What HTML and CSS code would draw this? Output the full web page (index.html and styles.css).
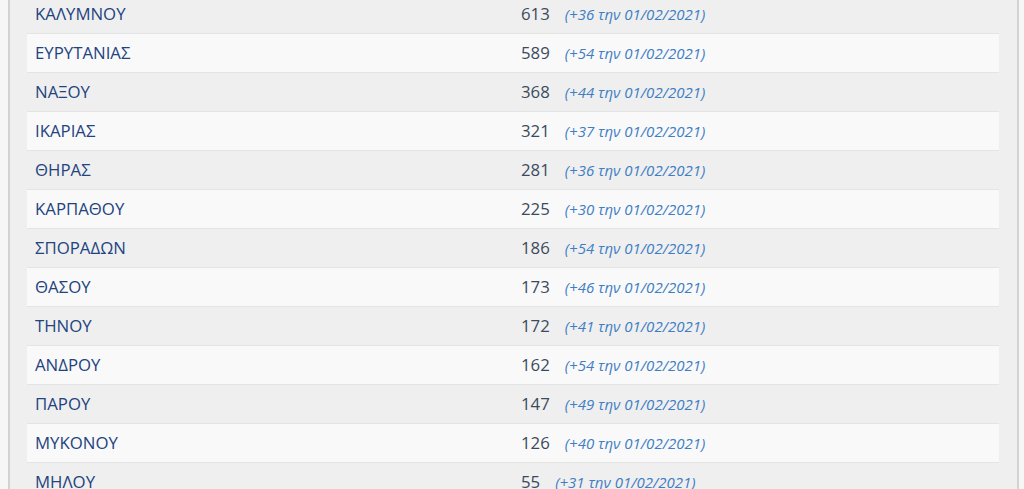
FILE: index.html
```html
<!DOCTYPE html>
<html>
<head>
  <title>Κρούσματα ανά περιφερειακή ενότητα</title>
  <link rel="stylesheet" href="styles.css">
</head>
<body>
  <div class="panel">
    <table class="cases">
      <tr><td>ΚΑΛΥΜΝΟΥ</td><td><span class="num">613</span><span class="diff">(+36 την 01/02/2021)</span></td></tr>
      <tr><td>ΕΥΡΥΤΑΝΙΑΣ</td><td><span class="num">589</span><span class="diff">(+54 την 01/02/2021)</span></td></tr>
      <tr><td>ΝΑΞΟΥ</td><td><span class="num">368</span><span class="diff">(+44 την 01/02/2021)</span></td></tr>
      <tr><td>ΙΚΑΡΙΑΣ</td><td><span class="num">321</span><span class="diff">(+37 την 01/02/2021)</span></td></tr>
      <tr><td>ΘΗΡΑΣ</td><td><span class="num">281</span><span class="diff">(+36 την 01/02/2021)</span></td></tr>
      <tr><td>ΚΑΡΠΑΘΟΥ</td><td><span class="num">225</span><span class="diff">(+30 την 01/02/2021)</span></td></tr>
      <tr><td>ΣΠΟΡΑΔΩΝ</td><td><span class="num">186</span><span class="diff">(+54 την 01/02/2021)</span></td></tr>
      <tr><td>ΘΑΣΟΥ</td><td><span class="num">173</span><span class="diff">(+46 την 01/02/2021)</span></td></tr>
      <tr><td>ΤΗΝΟΥ</td><td><span class="num">172</span><span class="diff">(+41 την 01/02/2021)</span></td></tr>
      <tr><td>ΑΝΔΡΟΥ</td><td><span class="num">162</span><span class="diff">(+54 την 01/02/2021)</span></td></tr>
      <tr><td>ΠΑΡΟΥ</td><td><span class="num">147</span><span class="diff">(+49 την 01/02/2021)</span></td></tr>
      <tr><td>ΜΥΚΟΝΟΥ</td><td><span class="num">126</span><span class="diff">(+40 την 01/02/2021)</span></td></tr>
      <tr><td>ΜΗΛΟΥ</td><td><span class="num">55</span><span class="diff">(+31 την 01/02/2021)</span></td></tr>
    </table>
  </div>
</body>
</html>
```

FILE: styles.css
```css
body {
  margin: 0;
  background-color: #f6f6f6;
  font-family: "Open Sans", "Noto Sans", sans-serif;
  overflow: hidden;
}

.panel {
  margin: -6px 5px 0 8px;
  background-color: #efefef;
  border-left: 2px solid #d2d2d2;
  border-right: 2px solid #d2d2d2;
  padding: 0 18px 0 17px;
  min-height: 600px;
}

.cases {
  width: 100%;
  border-collapse: collapse;
  font-size: 16.8px;
}

.cases td {
  width: 50%;
  padding: 8px;
  line-height: 22px;
  border-top: 1px solid #e4e4e4;
  color: #22437e;
}

.cases tr:nth-child(even) td {
  background-color: #f9f9f9;
}

.num {
  color: #3b4b5d;
}

.diff {
  margin-left: 15px;
  font-size: 15px;
  line-height: 1;
  font-style: italic;
  color: #3e7ec4;
}
```
